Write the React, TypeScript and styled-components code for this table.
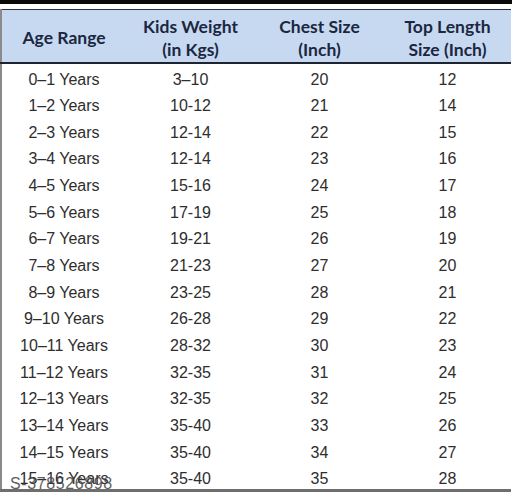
import styled, { createGlobalStyle } from "styled-components";

type SizeRow = {
  age: string;
  weight: string;
  chest: string;
  length: string;
};

const rows: SizeRow[] = [
  { age: "0–1 Years", weight: "3–10", chest: "20", length: "12" },
  { age: "1–2 Years", weight: "10-12", chest: "21", length: "14" },
  { age: "2–3 Years", weight: "12-14", chest: "22", length: "15" },
  { age: "3–4 Years", weight: "12-14", chest: "23", length: "16" },
  { age: "4–5 Years", weight: "15-16", chest: "24", length: "17" },
  { age: "5–6 Years", weight: "17-19", chest: "25", length: "18" },
  { age: "6–7 Years", weight: "19-21", chest: "26", length: "19" },
  { age: "7–8 Years", weight: "21-23", chest: "27", length: "20" },
  { age: "8–9 Years", weight: "23-25", chest: "28", length: "21" },
  { age: "9–10 Years", weight: "26-28", chest: "29", length: "22" },
  { age: "10–11 Years", weight: "28-32", chest: "30", length: "23" },
  { age: "11–12 Years", weight: "32-35", chest: "31", length: "24" },
  { age: "12–13 Years", weight: "32-35", chest: "32", length: "25" },
  { age: "13–14 Years", weight: "35-40", chest: "33", length: "26" },
  { age: "14–15 Years", weight: "35-40", chest: "34", length: "27" },
  { age: "15–16 Years", weight: "35-40", chest: "35", length: "28" },
];

export default function App() {
  return (
    <>
      <GlobalStyle />
      <ChartStyled>
        <div className="chart_topbar" />
        <SizeTable>
          <colgroup>
            <col style={{ width: 125 }} />
            <col style={{ width: 129 }} />
            <col style={{ width: 129 }} />
            <col style={{ width: 127 }} />
          </colgroup>
          <thead>
            <tr>
              <HeadCell>Age Range</HeadCell>
              <HeadCell>
                Kids Weight
                <br />
                (in Kgs)
              </HeadCell>
              <HeadCell>
                Chest Size
                <br />
                (Inch)
              </HeadCell>
              <HeadCell>
                Top Length
                <br />
                Size (Inch)
              </HeadCell>
            </tr>
          </thead>
          <tbody>
            {rows.map((r) => (
              <tr key={r.age}>
                <BodyCell>{r.age}</BodyCell>
                <BodyCell>{r.weight}</BodyCell>
                <BodyCell>{r.chest}</BodyCell>
                <BodyCell>{r.length}</BodyCell>
              </tr>
            ))}
          </tbody>
        </SizeTable>
        <Watermark>S-378526898</Watermark>
      </ChartStyled>
    </>
  );
}

const GlobalStyle = createGlobalStyle`
  body {
    margin: 0;
    background: #ffffff;
  }
`;

const ChartStyled = styled.div`
  position: relative;
  width: 512px;
  height: 494px;
  overflow: hidden;
  background: #ffffff;

  .chart_topbar {
    height: 4px;
    background: #0a0a0a;
    margin-bottom: 5px;
  }
`;

const SizeTable = styled.table`
  width: 510px;
  border-collapse: collapse;
  table-layout: fixed;
  border-top: 1px solid #2a3040;
  border-left: 2px solid #8a8a8a;
  border-bottom: 3px solid #6e6e6e;

  thead tr {
    background: #c6d9f1;
    border-bottom: 2px solid #1e2430;
  }
`;

const HeadCell = styled.th`
  box-sizing: border-box;
  height: 53px;
  padding: 4px 0 0;
  text-align: center;
  vertical-align: middle;
  font-family: Lato, "Open Sans", sans-serif;
  font-weight: 700;
  font-size: 17.5px;
  line-height: 23px;
  color: #1b2740;
`;

const BodyCell = styled.td`
  box-sizing: border-box;
  height: 26.7px;
  padding: 6px 0 0;
  text-align: center;
  vertical-align: middle;
  font-family: "Liberation Sans", Arial, sans-serif;
  font-size: 16px;
  line-height: 20px;
  color: #2e2e2e;
`;

const Watermark = styled.div`
  position: absolute;
  left: 10px;
  top: 475px;
  font-family: "Liberation Sans", Arial, sans-serif;
  font-size: 16px;
  letter-spacing: 0.6px;
  color: #444444;
  opacity: 0.85;
`;
